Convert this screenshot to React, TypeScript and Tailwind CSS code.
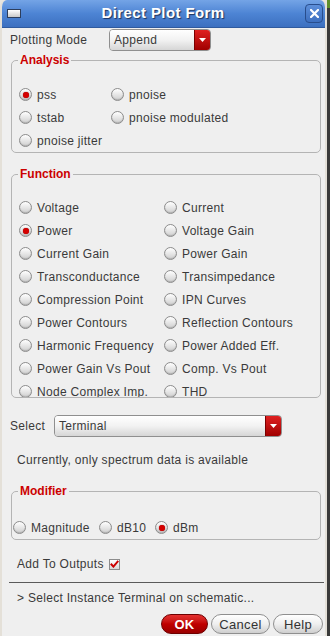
import React from 'react';

const font = { fontFamily: '"Liberation Sans", Arial, sans-serif' };

function Radio({ checked = false }: { checked?: boolean }) {
  return (
    <span className="relative inline-flex items-center justify-center w-[13px] h-[13px] rounded-full border border-[#8c8c8c] bg-gradient-to-b from-[#ffffff] to-[#cfcfcf] shadow-[inset_0_-1px_1px_rgba(0,0,0,0.15)] flex-shrink-0">
      {checked && <span className="w-[6px] h-[6px] rounded-full bg-[#d40000] shadow-[0_0_1px_#700]" />}
    </span>
  );
}

function Option({ label, checked, width }: { label: string; checked?: boolean; width?: string }) {
  return (
    <div className={`flex items-center h-[23px] gap-[5px] ${width ?? ''}`}>
      <Radio checked={checked} />
      <span className="whitespace-nowrap">{label}</span>
    </div>
  );
}

function Dropdown({ value, className }: { value: string; className: string }) {
  return (
    <div className={`flex h-[22px] rounded-[4px] border border-[#8f8f8f] overflow-hidden ${className}`}>
      <div className="flex-1 flex items-center pl-[4px] bg-gradient-to-b from-[#ffffff] via-[#f2f2f2] to-[#d6d6d6]">
        {value}
      </div>
      <div className="w-[16px] flex items-center justify-center bg-gradient-to-b from-[#e02020] to-[#a00000] border-l border-[#7a0000]">
        <svg width="7" height="4" viewBox="0 0 7 4">
          <path d="M0 0 L7 0 L3.5 4 Z" fill="#ffffff" />
        </svg>
      </div>
    </div>
  );
}

function Group({ title, children, className }: { title: string; children: React.ReactNode; className?: string }) {
  return (
    <fieldset className={`mx-[9px] w-[310px] border border-[#b4b4b4] rounded-[5px] px-0 pb-0 ${className ?? ''}`}>
      <legend className="ml-[6px] px-[2px] h-[14px] leading-[14px] font-bold text-[#cc0000] text-[12px] tracking-normal">{title}</legend>
      {children}
    </fieldset>
  );
}

export default function App() {
  const functions: [string, string][] = [
    ['Voltage', 'Current'],
    ['Power', 'Voltage Gain'],
    ['Current Gain', 'Power Gain'],
    ['Transconductance', 'Transimpedance'],
    ['Compression Point', 'IPN Curves'],
    ['Power Contours', 'Reflection Contours'],
    ['Harmonic Frequency', 'Power Added Eff.'],
    ['Power Gain Vs Pout', 'Comp. Vs Pout'],
    ['Node Complex Imp.', 'THD'],
  ];

  return (
    <div className="w-[330px] h-[636px] flex bg-[#e9e6df] text-[12px] tracking-[0.3px] text-[#3a3a3a]" style={font}>
      <div className="w-[327px] h-full flex flex-col rounded-t-[7px] overflow-hidden border-l-[2px] border-r-[2px] border-[#e4e0d8] bg-[#efefef]">
        {/* Title bar */}
        <div className="h-[28px] flex items-center relative bg-gradient-to-b from-[#74a4e6] via-[#4d84d4] to-[#3c70c0] border-b border-[#2f5a9e]">
          <div className="ml-[5px] w-[14px] h-[9px] border border-[#2d3e5c] bg-gradient-to-b from-[#ffffff] to-[#c9c9c9]" />
          <div className="flex-1 text-center font-bold text-[15px] tracking-[0.4px] text-white [text-shadow:1px_1px_1px_#1c335c]">
            Direct Plot Form
          </div>
          <div className="mr-[2px] w-[18px] h-[19px] rounded-[4px] border border-[#284d8c] bg-gradient-to-b from-[#5d8fda] to-[#3d6fbf] flex items-center justify-center">
            <svg width="9" height="9" viewBox="0 0 9 9">
              <path d="M1 1 L8 8 M8 1 L1 8" stroke="#ffffff" strokeWidth="2.2" strokeLinecap="square" />
            </svg>
          </div>
        </div>

        {/* Plotting mode */}
        <div className="mt-[1px] flex items-center h-[22px]">
          <span className="ml-[8px] w-[99px]">Plotting Mode</span>
          <Dropdown value="Append" className="w-[102px]" />
        </div>

        {/* Analysis */}
        <Group title="Analysis" className="mt-[2px]">
          <div className="pt-[16px] pl-[7px]">
            <div className="flex">
              <Option label="pss" checked width="w-[92px]" />
              <Option label="pnoise" />
            </div>
            <div className="flex">
              <Option label="tstab" width="w-[92px]" />
              <Option label="pnoise modulated" />
            </div>
            <Option label="pnoise jitter" />
          </div>
        </Group>

        {/* Function */}
        <Group title="Function" className="mt-[14px]">
          <div className="pt-[15px] pl-[7px] h-[216px] overflow-hidden">
            {functions.map(([a, b], i) => (
              <div key={a} className="flex">
                <Option label={a} checked={i === 1} width="w-[145px]" />
                <Option label={b} />
              </div>
            ))}
          </div>
        </Group>

        {/* Select */}
        <div className="mt-[17px] flex items-center h-[22px]">
          <span className="ml-[8px] w-[44px]">Select</span>
          <Dropdown value="Terminal" className="w-[228px]" />
        </div>

        <div className="mt-[16px] ml-[15px] h-[14px] leading-[14px]">Currently, only spectrum data is available</div>

        {/* Modifier */}
        <Group title="Modifier" className="mt-[17px]">
          <div className="pt-[18px] pl-[1px] flex">
            <Option label="Magnitude" width="w-[86px]" />
            <Option label="dB10" width="w-[56px]" />
            <Option label="dBm" checked />
          </div>
        </Group>

        {/* Add to outputs */}
        <div className="mt-[14px] ml-[15px] h-[20px] flex items-center gap-[5px]">
          <span>Add To Outputs</span>
          <span className="w-[11px] h-[11px] border border-[#8c8c8c] bg-gradient-to-b from-[#ffffff] to-[#d8d8d8] flex items-center justify-center">
            <svg width="9" height="8" viewBox="0 0 9 8">
              <path d="M0.8 3.8 L3.4 6.6 L8.3 0.8" stroke="#cc0000" strokeWidth="2" fill="none" />
            </svg>
          </span>
        </div>

        <div className="mt-[8px] ml-[7px] mr-[1px] h-[1px] bg-[#5a5a5a]" />

        <div className="mt-[8px] ml-[15px] h-[14px] leading-[14px]">&gt; Select Instance Terminal on schematic...</div>

        {/* Buttons */}
        <div className="mt-[9px] flex justify-end gap-[3px] pr-[2px] h-[20px]">
          <button className="w-[47px] h-[20px] rounded-full border border-[#6e0000] bg-gradient-to-b from-[#e43030] via-[#c00000] to-[#9a0000] text-white font-bold text-[13px] leading-none">
            OK
          </button>
          <button className="w-[59px] h-[20px] rounded-full border border-[#8f8f8f] bg-gradient-to-b from-[#ffffff] via-[#efefef] to-[#cfcfcf] text-[13px] text-[#333333] leading-none">
            Cancel
          </button>
          <button className="w-[50px] h-[20px] rounded-full border border-[#8f8f8f] bg-gradient-to-b from-[#ffffff] via-[#efefef] to-[#cfcfcf] text-[13px] text-[#333333] leading-none">
            Help
          </button>
        </div>
        <div className="flex-1 mt-[2px] bg-[#e9e6df]" />
      </div>
      <div className="w-[3px] h-full flex flex-col">
        <div className="h-[8px] bg-[#5f8f2c]" />
        <div className="flex-1 bg-[#3a3a3a]" />
      </div>
    </div>
  );
}
